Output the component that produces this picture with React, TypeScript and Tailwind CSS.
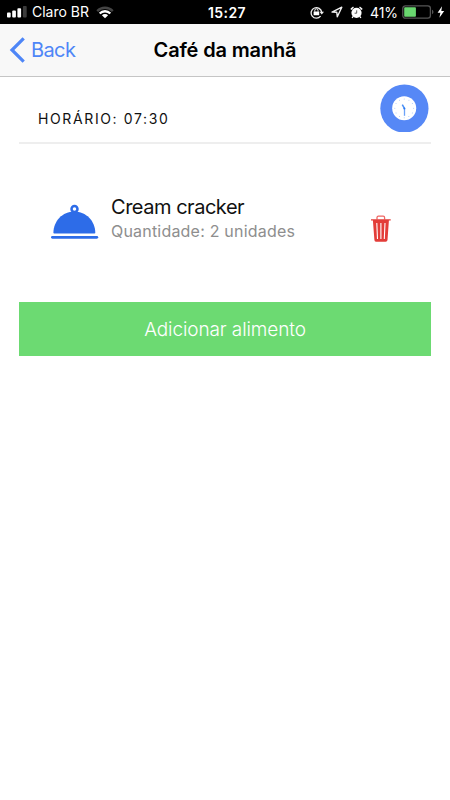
import React from "react";

function SignalIcon() {
  return (
    <svg className="block h-[12px] w-[20px]" viewBox="0 0 20 12" fill="#fff">
      <rect x="0" y="6.5" width="3.7" height="5" rx="0.9" />
      <rect x="5.2" y="4.6" width="3.7" height="6.9" rx="0.9" />
      <rect x="10.4" y="2.2" width="3.7" height="9.3" rx="0.9" />
      <rect x="15.9" y="0" width="3.8" height="11.5" rx="0.9" fill="#3c3c3c" />
    </svg>
  );
}

function WifiIcon() {
  return (
    <svg className="block h-[13px] w-[18px]" viewBox="0 0 18 13" fill="none">
      <path d="M1.2 5.1C5.5 0.6 12.5 0.6 16.8 5.1" stroke="#444" strokeWidth="2.3" />
      <path d="M3.7 7.5C6.6 4.5 11.4 4.5 14.3 7.5" stroke="#fff" strokeWidth="2.3" />
      <path d="M9 12.2L5.9 9.2C7.5 7.7 10.5 7.7 12.1 9.2Z" fill="#fff" />
    </svg>
  );
}

function LockIcon() {
  return (
    <svg className="block h-[13px] w-[14px]" viewBox="0 0 14 13" fill="none">
      <path d="M10.6 10.2A5.3 5.3 0 1 1 11.7 6.2" stroke="#eee" strokeWidth="1.3" />
      <path d="M9.5 5.7H14L11.75 8.6Z" fill="#eee" />
      <rect x="3.6" y="5.4" width="5.6" height="3.9" rx="0.4" fill="#fff" />
      <path d="M4.8 5.6V4.4a1.6 1.6 0 0 1 3.2 0V5.6" stroke="#fff" strokeWidth="1" />
    </svg>
  );
}

function LocationIcon() {
  return (
    <svg className="block h-[12px] w-[12px]" viewBox="0 0 12 12" fill="none">
      <path d="M1 6.1L10.8 1.2L6.3 10.8L5.8 6.3Z" stroke="#eee" strokeWidth="1.4" strokeLinejoin="round" />
    </svg>
  );
}

function AlarmIcon() {
  return (
    <svg className="block h-[13px] w-[13px]" viewBox="0 0 13 13" fill="none">
      <circle cx="6.5" cy="6.8" r="5.1" fill="#fff" />
      <path d="M0.9 3.5A7 7 0 0 1 3.5 1.1M9.5 1.1A7 7 0 0 1 12.1 3.5" stroke="#fff" strokeWidth="1.5" />
      <path d="M3.2 10.3L2.1 12M9.8 10.3L10.9 12" stroke="#fff" strokeWidth="1.3" />
      <path d="M6.7 4.3V7.2H4.6" stroke="#333" strokeWidth="0.8" />
    </svg>
  );
}

function BatteryIcon() {
  return (
    <svg className="block h-[14px] w-[32px]" viewBox="0 0 32 14" fill="none">
      <rect x="0.8" y="0.8" width="27.6" height="12.4" rx="2.6" stroke="#555" strokeWidth="1.3" />
      <rect x="2.2" y="2.2" width="11.7" height="9.6" rx="0.8" fill="#69d76f" />
      <path d="M30 4.8C31.9 5.5 31.9 8.5 30 9.2Z" fill="#555" />
    </svg>
  );
}

function BoltIcon() {
  return (
    <svg className="block h-[12px] w-[8px]" viewBox="0 0 8 12" fill="#fff">
      <path d="M5 0.3L0.6 6.7H3.4L2.4 11.8L7.2 4.9H4.3Z" />
    </svg>
  );
}

function StatusBar() {
  return (
    <div className="flex h-6 items-center bg-black text-white">
      <div className="flex w-[208px] items-center pl-[7px]">
        <SignalIcon />
        <span className="ml-[5px] w-[57px] text-[14px] leading-6 tracking-[0px] whitespace-nowrap">Claro BR</span>
        <span className="ml-[7px]"><WifiIcon /></span>
      </div>
      <span className="w-[102px] pt-px text-[14px] leading-6 font-semibold tracking-[0.4px]">15:27</span>
      <LockIcon />
      <span className="ml-[7px]"><LocationIcon /></span>
      <span className="ml-[7px]"><AlarmIcon /></span>
      <span className="ml-[7px] w-[30px] pt-px text-[14px] leading-6 tracking-[-0.1px]">41%</span>
      <span className="ml-[2px]"><BatteryIcon /></span>
      <span className="ml-[3px]"><BoltIcon /></span>
    </div>
  );
}

function NavBar() {
  return (
    <div className="grid h-[53px] grid-cols-[1fr_auto_1fr] items-center border-b border-[#c5c5c5] bg-[#f8f8f8]">
      <div className="flex items-center pl-[9px] text-[#4e86f7]">
        <svg className="block h-[26px] w-[16px]" viewBox="0 0 16 26" fill="none">
          <path d="M14.7 1.3L3 13L14.7 24.7" stroke="currentColor" strokeWidth="3.2" />
        </svg>
        <span className="ml-[6px] text-[20px] leading-6 tracking-[-0.6px]">Back</span>
      </div>
      <h1 className="text-[20px] leading-6 font-semibold tracking-[-0.15px] text-black">Café da manhã</h1>
      <div />
    </div>
  );
}

const clockTicks = Array.from({ length: 12 }, (_, i) => i * 30);

function ClockButton() {
  return (
    <button className="block h-[48px] w-[49px]" aria-label="Horário">
      <svg className="block h-[48px] w-[49px]" viewBox="0 0 49 48" fill="none">
        <circle cx="24.4" cy="24.5" r="24.1" fill="#5688f6" />
        <circle cx="24.2" cy="24.3" r="12" fill="#fff" />
        {clockTicks.map((angle) => (
          <circle key={angle} cx="24.2" cy="14.9" r="0.5" fill="#a3c2fa" transform={`rotate(${angle} 24.2 24.3)`} />
        ))}
        <path d="M24.5 24.3V31.8" stroke="#6ba2f9" strokeWidth="1.3" />
        <path d="M24.4 24.4L22.3 20.6" stroke="#4a90f6" strokeWidth="1.5" />
        <circle cx="24.4" cy="24.4" r="1" fill="#2878f0" />
      </svg>
    </button>
  );
}

function DishIcon() {
  return (
    <svg className="block h-[36px] w-[48px]" viewBox="0 0 48 36" fill="none">
      <circle cx="23.5" cy="5" r="3" stroke="#2d6ce8" strokeWidth="2.5" />
      <path d="M2.4 28.8C2.5 17 11.5 7.5 23.3 7.5S44.2 17 44.3 28.8Q44.3 29.4 43.5 29.4H3.2Q2.4 29.4 2.4 28.8Z" fill="#2d6ce8" />
      <rect x="0" y="31.9" width="47.2" height="2.8" rx="1.4" fill="#2d6ce8" />
    </svg>
  );
}

function TrashIcon() {
  return (
    <svg className="block h-[28px] w-[20px]" viewBox="0 0 20 28" fill="none">
      <path d="M6 4.4V2.7Q6 1.2 7.4 1.2H12.2Q13.6 1.2 13.6 2.7V4.4" stroke="#ef6663" strokeWidth="1.3" />
      <path d="M0 4.2H19.7V5.5H17.9L16.5 25Q16.3 26.8 14.7 26.8H5Q3.5 26.8 3.4 25L1.9 5.5H0Z" fill="#e33d39" />
      <path d="M5.8 7.9L6.5 23.9M9.9 7.9V23.9M14 7.9L13.3 23.9" stroke="#fff" strokeWidth="1.1" />
    </svg>
  );
}

export default function App() {
  return (
    <div className="h-[800px] w-[450px] overflow-hidden bg-white font-['Inter','Liberation_Sans',sans-serif]">
      <StatusBar />
      <NavBar />
      <main className="px-[19px]">
        <div className="flex h-[67px] items-start justify-between border-b-2 border-[#eeeeee] pt-[7px] pr-[2px] pl-[19px]">
          <span className="mt-[25px] text-[14px] leading-5 tracking-[1.62px] text-[#111]">HORÁRIO: 07:30</span>
          <ClockButton />
        </div>
        <div className="mt-[51px] flex h-[50px] items-start pl-[32px]">
          <div className="mt-[9px]"><DishIcon /></div>
          <div className="ml-[12px] w-[260px]">
            <div className="text-[20px] leading-6 tracking-[-0.48px] text-[#111]">Cream cracker</div>
            <div className="mt-[2px] text-[16px] leading-5 tracking-[0.2px] text-[#8e8e8e]">Quantidade: 2 unidades</div>
          </div>
          <button className="mt-[20px]" aria-label="Remover"><TrashIcon /></button>
        </div>
        <button className="mt-[57px] block h-[54px] w-full bg-[#6cda72] pt-px text-[19px] leading-6 font-light tracking-[-0.1px] text-white">Adicionar alimento</button>
      </main>
    </div>
  );
}
